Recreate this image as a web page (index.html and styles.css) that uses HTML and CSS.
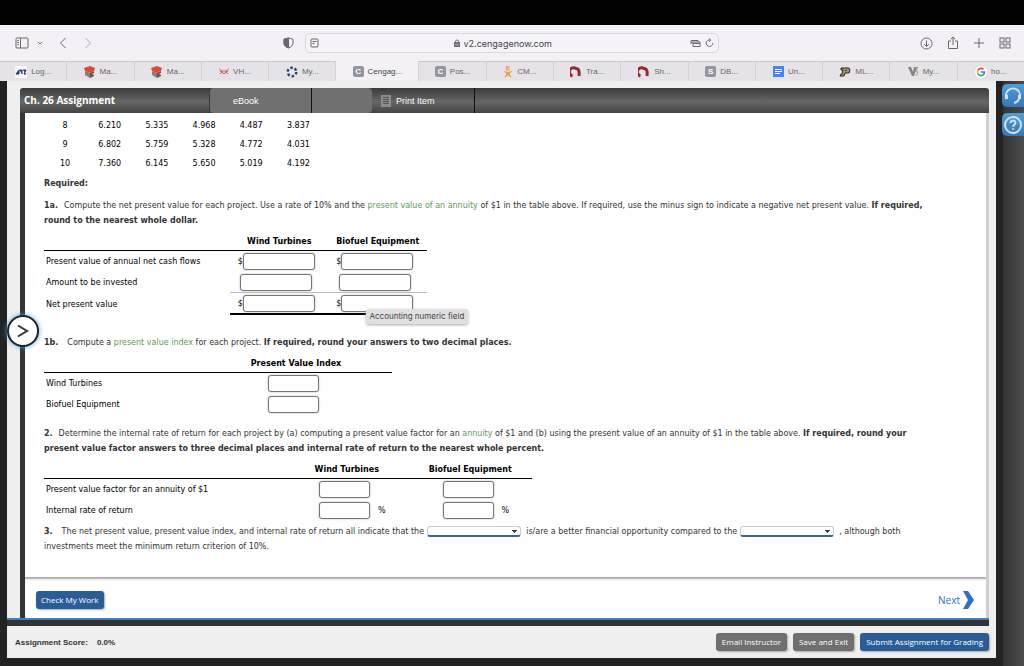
FILE: index.html
```html
<!DOCTYPE html>
<html lang="en">
<head>
    <meta charset="UTF-8">
    <meta name="viewport" content="width=device-width, initial-scale=1.0">
    <title>Ch. 26 Assignment - CengageNOW</title>
    <link rel="stylesheet" href="styles.css">
</head>
<body>
    <!-- Browser toolbar -->
    <header class="toolbar">
        <div class="tools tools-left">
            <button class="icon-btn" aria-label="Show sidebar"><svg width="14" height="12" viewBox="0 0 14 12"><rect x="1" y="1" width="12" height="10" rx="1"/><path d="M5.5 1v10M2.3 3.5h1.6M2.3 5.5h1.6M2.3 7.5h1.6"/></svg></button>
            <button class="icon-btn chevron" aria-label="Tab groups"><svg width="6" height="5" viewBox="0 0 6 5"><path d="M1 1l2 2 2-2"/></svg></button>
            <button class="icon-btn back" aria-label="Back"><svg width="8" height="12" viewBox="0 0 8 12"><path d="M6.5 1L1.500 6l5 5"/></svg></button>
            <button class="icon-btn forward" aria-label="Forward"><svg width="8" height="12" viewBox="0 0 8 12"><path d="M1.500 1l5 5-5 5"/></svg></button>
            <button class="icon-btn shield" aria-label="Privacy report"><svg width="11" height="12" viewBox="0 0 11 12"><path d="M5.500 1L10 2.200V6c0 2.500-2 4-4.500 5C3 10 1 8.500 1 6V2.200z"/><path d="M5.500 1L1 2.200V6c0 2.500 2 4 4.500 5z" fill="#6b696e"/></svg></button>
        </div>
        <div class="address">
            <svg width="9" height="10" viewBox="0 0 9 10"><rect x="1" y="1" width="7" height="8" rx="1"/><path d="M2.500 3.500h4M2.500 5.500h2"/></svg>
            <div class="address-url">
                <svg width="6" height="8" viewBox="0 0 6 8"><path d="M1.500 4V2.500a1.500 1.500 0 013 0V4"/><rect x="0.500" y="3.500" width="5" height="4" fill="#8c8a8f"/></svg>
                <input type="text" value="v2.cengagenow.com" aria-label="Address">
            </div>
            <svg width="11" height="9" viewBox="0 0 11 9"><path d="M3 7.500h7V3H3zM1 5V1.500h7V3M1 3.200h2M3 4.500h7"/></svg>
            <svg width="9" height="10" viewBox="0 0 9 10"><path d="M7.800 5a3.300 3.300 0 11-2.500-3M4 .5l1.700 1.600L4.200 3.800"/></svg>
        </div>
        <div class="tools tools-right">
            <button class="icon-btn" aria-label="Downloads"><svg width="13" height="13" viewBox="0 0 13 13"><circle cx="6.500" cy="6.500" r="5.500"/><path d="M6.500 3.500v6M4.200 7.200l2.300 2.300 2.300-2.300"/></svg></button>
            <button class="icon-btn" aria-label="Share"><svg width="12" height="14" viewBox="0 0 12 14"><path d="M4 5H1.500v7.500h9V5H8M6 9V1M3.700 3.200L6 1l2.300 2.200"/></svg></button>
            <button class="icon-btn" aria-label="New tab"><svg width="12" height="12" viewBox="0 0 12 12"><path d="M6 1v10M1 6h10"/></svg></button>
            <button class="icon-btn" aria-label="Tab overview"><svg width="12" height="12" viewBox="0 0 12 12"><rect x="1" y="1" width="4" height="4"/><rect x="7" y="1" width="4" height="4"/><rect x="1" y="7" width="4" height="4"/><rect x="7" y="7" width="4" height="4"/></svg></button>
        </div>
    </header>

    <nav class="tabs">
        <a href="#" class="tab"><svg width="12" height="12" viewBox="0 0 12 12"><rect width="12" height="12" fill="#f8f8fa"/><path d="M1 8l3-4v4zM4.500 4h2.500v4M8 4h3L9 8h2" fill="#3c4a86" stroke="#28316f"/></svg>Log...</a>
        <a href="#" class="tab"><svg width="12" height="12" viewBox="0 0 12 12"><path d="M1 5l5 2v5L1 9z" fill="#8b7d72"/><path d="M6 7l4-2v2L8 8l2 1v1l-4 2z" fill="#62554c"/><path d="M0 2l6-2 5 2-1 3-4 2-5-2z" fill="#d94b36"/></svg>Ma...</a>
        <a href="#" class="tab"><svg width="12" height="12" viewBox="0 0 12 12"><path d="M1 5l5 2v5L1 9z" fill="#8b7d72"/><path d="M6 7l4-2v2L8 8l2 1v1l-4 2z" fill="#62554c"/><path d="M0 2l6-2 5 2-1 3-4 2-5-2z" fill="#d94b36"/></svg>Ma...</a>
        <a href="#" class="tab"><svg width="10" height="8" viewBox="0 0 10 8"><path d="M0 1l3 2h4l3-2M1 3.500h2l1 2h2l1-2h2M3 4L1 6M7 4l2 2" fill="none" stroke="#cf4547" stroke-width="0.800"/></svg>VH...</a>
        <a href="#" class="tab"><svg width="12" height="12" viewBox="0 0 12 12"><circle cx="6" cy="6" r="4.300" fill="none" stroke="#1d4470" stroke-width="2.400" stroke-dasharray="2.500 2"/></svg>My...</a>
        <a href="#" class="tab active"><span class="letter">C</span>Cengag...</a>
        <a href="#" class="tab"><span class="letter">C</span>Pos...</a>
        <a href="#" class="tab"><svg width="10" height="12" viewBox="0 0 10 12"><path d="M6.500 1h-3v2.500h3M1 5.500q4 2 8 0M3 8h4M2 11l3-3 3 3" fill="none" stroke="#f19a48" stroke-width="1.300"/></svg>CM...</a>
        <a href="#" class="tab"><svg width="12" height="12" viewBox="0 0 12 12"><path d="M2.500 10A4.200 4.200 0 116 2.500c3 0 3.500 3 3 7.500" fill="none" stroke="#98282f" stroke-width="3"/></svg>Tra...</a>
        <a href="#" class="tab"><svg width="12" height="12" viewBox="0 0 12 12"><path d="M2.500 10A4.200 4.200 0 116 2.500c3 0 3.500 3 3 7.500" fill="none" stroke="#98282f" stroke-width="3"/></svg>Sh...</a>
        <a href="#" class="tab"><span class="letter">S</span>DB...</a>
        <a href="#" class="tab"><svg width="11" height="11" viewBox="0 0 11 11"><rect width="11" height="11" fill="#4a80ec"/><path d="M2 3.500h7M2 5.500h7M2 7.500h5" stroke="#fff"/></svg>Un...</a>
        <a href="#" class="tab"><svg width="12" height="10" viewBox="0 0 12 10"><path d="M2 1h8l1 2-1 3H6L5 9H1l1-2h1l1-4H2z" fill="#a6946b" stroke="#262421"/><path d="M6.500 3H8L7.500 4H6z" fill="#262421"/></svg>ML...</a>
        <a href="#" class="tab"><svg width="11" height="11" viewBox="0 0 11 11"><path d="M0 1h3l2 5 1-5h3L6 10H4z" fill="#85827f"/><path d="M7 3l3-2-2 4 2 1-2 4" fill="none" stroke="#a59a91"/></svg>My...</a>
        <a href="#" class="tab"><svg width="12" height="12" viewBox="0 0 12 12"><circle cx="6" cy="6" r="6" fill="#fff"/><g fill="none" stroke-width="1.700"><path d="M8.500 3.300A3.500 3.500 0 002.800 4.500" stroke="#e64a3c"/><path d="M2.800 4.500a3.500 3.500 0 000 3" stroke="#f4b928"/><path d="M2.800 7.500A3.500 3.500 0 008 9" stroke="#3ba656"/><path d="M8 9a3.500 3.500 0 001.500-3H6" stroke="#437fe8"/></g></svg>ho...</a>
    </nav>

    <div class="page">
        <main class="app">
            <div class="assignment">
                <div class="title-bar">
                    <h1>Ch. 26 Assignment</h1>
                    <button class="menu-item ebook">eBook</button>
                    <span class="menu-blank"></span>
                    <button class="menu-item print"><svg width="10" height="12" viewBox="0 0 10 12"><rect width="10" height="12" fill="#8c8c8c"/><path d="M2 2.500h6M2 4.500h6M2 6.500h6M2 8.500h6" stroke="#555"/></svg>Print Item</button>
                </div>

                <div class="content">
                    <table class="factors">
                        <tr><td>8</td><td>6.210</td><td>5.335</td><td>4.968</td><td>4.487</td><td>3.837</td></tr>
                        <tr><td>9</td><td>6.802</td><td>5.759</td><td>5.328</td><td>4.772</td><td>4.031</td></tr>
                        <tr><td>10</td><td>7.360</td><td>6.145</td><td>5.650</td><td>5.019</td><td>4.192</td></tr>
                    </table>
                    <p class="required"><b>Required:</b></p>

                    <p class="question"><b class="num">1a.</b>Compute the net present value for each project. Use a rate of 10% and the <a href="#">present value of an annuity</a> of $1 in the table above. If required, use the minus sign to indicate a negative net present value. <b>If required,<br>round to the nearest whole dollar.</b></p>
                    <table class="answers npv">
                        <tr><th class="label"></th><th>Wind Turbines</th><th>Biofuel Equipment</th></tr>
                        <tr>
                            <td class="label">Present value of annual net cash flows</td>
                            <td>$<input type="text" aria-label="Wind Turbines present value"></td>
                            <td>$<input type="text" aria-label="Biofuel Equipment present value"></td>
                        </tr>
                        <tr class="subtotal">
                            <td class="label">Amount to be invested</td>
                            <td><input type="text" aria-label="Wind Turbines amount invested"></td>
                            <td><input type="text" aria-label="Biofuel Equipment amount invested"></td>
                        </tr>
                        <tr class="total">
                            <td class="label">Net present value</td>
                            <td>$<input type="text" aria-label="Wind Turbines net present value"></td>
                            <td class="has-tip">$<input type="text" aria-label="Biofuel Equipment net present value"><span class="tooltip">Accounting numeric field</span></td>
                        </tr>
                    </table>

                    <p class="question part-b"><b class="num wide">1b.</b>Compute a <a href="#">present value index</a> for each project. <b>If required, round your answers to two decimal places.</b></p>
                    <table class="answers index">
                        <tr><th class="label"></th><th>Present Value Index</th></tr>
                        <tr><td class="label"><label for="pvi-wind">Wind Turbines</label></td><td><input type="text" id="pvi-wind"></td></tr>
                        <tr><td class="label"><label for="pvi-bio">Biofuel Equipment</label></td><td><input type="text" id="pvi-bio"></td></tr>
                    </table>

                    <p class="question part-2"><b class="num">2.</b>Determine the internal rate of return for each project by (a) computing a present value factor for an <a href="#">annuity</a> of $1 and (b) using the present value of an annuity of $1 in the table above. <b>If required, round your<br>present value factor answers to three decimal places and internal rate of return to the nearest whole percent.</b></p>
                    <table class="answers irr">
                        <tr><th class="label"></th><th>Wind Turbines</th><th>Biofuel Equipment</th></tr>
                        <tr>
                            <td class="label">Present value factor for an annuity of $1</td>
                            <td><input type="text" aria-label="Wind Turbines factor"></td>
                            <td><input type="text" aria-label="Biofuel Equipment factor"></td>
                        </tr>
                        <tr>
                            <td class="label">Internal rate of return</td>
                            <td><input type="text" aria-label="Wind Turbines rate of return"><span class="percent">%</span></td>
                            <td><input type="text" aria-label="Biofuel Equipment rate of return"><span class="percent">%</span></td>
                        </tr>
                    </table>

                    <p class="question part-3"><b class="num wide">3.</b>The net present value, present value index, and internal rate of return all indicate that the <select aria-label="Better project"><option></option><option>wind turbines</option><option>biofuel equipment</option></select> is/are a better financial opportunity compared to the <select aria-label="Other project"><option></option><option>wind turbines</option><option>biofuel equipment</option></select> , although both<br>investments meet the minimum return criterion of 10%.</p>
                </div>

                <div class="actions">
                    <button class="btn primary">Check My Work</button>
                    <a href="#" class="next">Next<svg width="11" height="18" viewBox="0 0 11 18"><path d="M0 0h5l6 9-6 9H0l5-9z" fill="#2f6fc4"/></svg></a>
                </div>
                <button class="expand" aria-label="Open navigation"><svg width="12" height="14" viewBox="0 0 12 14"><path d="M1 1.500L10 7l-9 5.500"/></svg></button>
            </div>
            <footer class="score-bar">
                <p class="score">Assignment Score:<span>0.0%</span></p>
                <button class="btn">Email Instructor</button>
                <button class="btn">Save and Exit</button>
                <button class="btn primary">Submit Assignment for Grading</button>
            </footer>
        </main>
        <aside class="side">
            <button class="side-btn" aria-label="Support"><svg width="18" height="18" viewBox="0 0 18 18"><path d="M3 12a7 7 0 1112 0c-1 2-2.500 3.500-5 4"/><path d="M2.500 8v4M15.500 8v4" stroke-width="3"/></svg></button>
            <button class="side-btn" aria-label="Help"><svg width="18" height="18" viewBox="0 0 18 18"><circle cx="9" cy="9" r="8"/><path d="M6.500 7a2.500 2.500 0 115 0c0 1.500-2.500 2-2.500 3.800M9 12.200v1.600"/></svg></button>
        </aside>
    </div>
</body>
</html>
```

FILE: styles.css
```css
* {
    box-sizing: border-box;
}
body {
    margin: 0;
    height: 100vh;
    padding-top: 25px;
    display: flex;
    flex-direction: column;
    overflow: hidden;
    background: #000;
    font-family: "DejaVu Sans", Verdana, sans-serif;
    font-size: 8px;
    color: #333;
}
button, input, select {
    font: inherit;
    margin: 0;
}
p, h1 {
    margin: 0;
}

/* Browser toolbar */
.toolbar {
    display: grid;
    grid-template-columns: 1fr 40.5% 1fr;
    align-items: center;
    height: 36px;
    flex: none;
    background: #f3f1f6;
}
.toolbar svg {
    display: block;
    flex: none;
    fill: none;
    stroke: #6b696e;
}
.tools {
    display: flex;
    align-items: center;
}
.tools-left {
    padding: 0 11px 0 15px;
}
.tools-right {
    justify-content: flex-end;
    gap: 14px;
    padding-right: 13px;
}
.icon-btn {
    padding: 0;
    border: 0;
    background: none;
}
.chevron {
    margin-left: 8px;
}
.back {
    margin-left: 16px;
}
.forward {
    margin-left: 17px;
    opacity: 0.5;
}
.shield {
    margin-left: auto;
}
.address {
    display: flex;
    align-items: center;
    gap: 4px;
    height: 20px;
    padding: 0 4px;
    border: 1px solid #dbd9de;
    border-radius: 5px;
    background: #f5f3f8;
}
.address-url {
    flex: 1;
    display: flex;
    align-items: center;
    justify-content: center;
    gap: 4px;
}
.address-url input {
    width: 92px;
    padding: 0;
    border: 0;
    background: none;
    font: 9px Inter, sans-serif;
    color: #444;
}

/* Tabs */
.tabs {
    display: flex;
    flex: none;
    height: 20px;
    background: #e5e3e8;
}
.tab {
    flex: 1;
    display: flex;
    align-items: center;
    justify-content: center;
    gap: 4px;
    border-top: 1px solid #c9c7cc;
    border-right: 1px solid #d3d1d6;
    font: 8px "Liberation Sans", Arial, sans-serif;
    color: #666;
    text-decoration: none;
}
.tab.active {
    flex: none;
    width: 83px;
    background: #f3f1f6;
    border-top-color: #f3f1f6;
    color: #444;
}
.tab:last-child {
    border-right: 0;
}
.letter {
    width: 11px;
    height: 11px;
    border-radius: 2px;
    background: #9295a0;
    color: #fff;
    font-weight: bold;
    line-height: 11px;
    text-align: center;
}

/* Page */
.page {
    flex: 1;
    min-height: 0;
    display: flex;
    padding-left: 7px;
    background: #222;
}
.app {
    flex: 1;
    min-width: 0;
    display: flex;
    flex-direction: column;
    margin: 0 7px 8px 0;
    background: #efefef;
}
.assignment {
    position: relative;
    flex: 1;
    min-height: 0;
    display: flex;
    flex-direction: column;
    margin: 7px 7px 0 13px;
}
.title-bar {
    display: flex;
    flex: none;
    height: 25px;
    border-radius: 3px 3px 0 0;
    background: linear-gradient(#3b3b3b, #666 55%, #444);
}
.title-bar h1 {
    width: 190px;
    padding-left: 4px;
    font: bold 10px/24px "Open Sans", sans-serif;
    color: #fff;
    border-right: 1px solid #3a3a3a;
}
.menu-item {
    display: flex;
    align-items: center;
    border: 0;
    border-right: 1px solid #111;
    font: 9px "Liberation Sans", Arial, sans-serif;
    color: #fff;
    background: none;
}
.ebook {
    width: 102px;
    padding: 0 23px;
    background: #707070;
    border-radius: 4px 0 0 4px;
}
.menu-blank {
    width: 60px;
    background: #707070;
    border-radius: 0 4px 4px 0;
}
.print {
    width: 103px;
    padding: 0 9px;
    gap: 5px;
}
.content {
    flex: 1;
    min-height: 0;
    overflow: hidden;
    padding: 3px 0 0 19px;
    background: #fff;
    border-left: 5px solid #333537;
    border-right: 3px solid #cfcfcf;
}
table {
    border-collapse: separate;
    border-spacing: 0;
    table-layout: fixed;
    color: #000;
}
td, th {
    padding: 0;
}
.factors {
    width: 278px;
    text-align: center;
}
.factors td {
    width: 47px;
    height: 19px;
}
.factors td:first-child {
    width: 42px;
}
.required {
    line-height: 15px;
    margin: 3px 0 7px;
}
.question {
    line-height: 15px;
    white-space: nowrap;
}
.question a {
    color: #5f9a58;
    text-decoration: none;
}
.num {
    margin-right: 6px;
}
.num.wide {
    margin-right: 9px;
}
.part-b {
    margin-top: 20px;
}
.part-2 {
    margin-top: 11px;
}
.part-3 {
    margin-top: 3px;
}

/* Answer tables */
.answers {
    margin-top: 4px;
}
.answers th {
    height: 19px;
    border-bottom: 1px solid #000;
}
.answers td {
    height: 21px;
    text-align: center;
    white-space: nowrap;
}
.answers td.label {
    padding-left: 2px;
    text-align: left;
}
.answers input {
    width: 51px;
    height: 17px;
    padding: 0 3px;
    border: 1px solid #777;
    border-radius: 3px;
    background: #fff;
    box-shadow: 0 0 2px #aaa;
    vertical-align: middle;
}
.npv {
    width: 383px;
}
.npv .label {
    width: 186px;
}
.npv td:not(.label), .index td:not(.label) {
    padding-right: 6px;
}
.npv input {
    width: 72px;
}
.subtotal td:not(.label) {
    border-bottom: 1px solid #bbb;
}
.answers .total td {
    height: 22px;
}
.total td:not(.label) {
    border-bottom: 2px solid #000;
}
.index {
    width: 348px;
}
.index .label {
    width: 156px;
}
.irr {
    width: 488px;
}
.irr .label {
    width: 241px;
}
.irr td:not(.label) {
    padding-left: 34px;
    text-align: left;
}
.percent {
    margin-left: 8px;
}
.has-tip {
    position: relative;
}
.tooltip {
    position: absolute;
    top: 16px;
    left: 37px;
    z-index: 1;
    padding: 0 4px;
    background: #e2dfe3;
    border-radius: 3px;
    box-shadow: 0 1px 3px #aaa;
    font: 8px/15px Inter, sans-serif;
    color: #444;
}
.question select {
    appearance: none;
    width: 94px;
    height: 11px;
    padding: 0;
    border: 1px solid #ccc;
    border-bottom: 2px solid #37659a;
    border-radius: 3px;
    background: linear-gradient(#444, #444) no-repeat right 3px top 3px / 5px 1px,
                linear-gradient(#444, #444) no-repeat right 4px top 4px / 3px 1px,
                linear-gradient(#444, #444) no-repeat right 5px top 5px / 1px 1px,
                #fff;
    vertical-align: middle;
    margin-right: 3px;
}

/* Bottom bars */
.actions {
    flex: none;
    display: flex;
    align-items: center;
    justify-content: space-between;
    height: 41px;
    padding: 5px 12px 0 11px;
    background: #fff;
    border-left: 5px solid #333537;
    border-right: 3px solid #cfcfcf;
    box-shadow: inset 0 3px 2px -1px #aaa;
}
.btn {
    height: 18px;
    padding: 0 6px;
    border: 0;
    border-radius: 3px;
    background: #6f6f6f;
    color: #fff;
    font: 8px/18px "Open Sans", sans-serif;
    box-shadow: 1px 1px 2px #aaa;
}
.btn.primary {
    background: #2a5d96;
}
.actions .btn {
    padding: 0 5px;
}
.next {
    display: flex;
    align-items: center;
    gap: 3px;
    font: 10px "Open Sans", sans-serif;
    color: #2f6fc4;
    text-decoration: none;
}
.expand {
    position: absolute;
    top: 227px;
    left: -13px;
    width: 32px;
    height: 32px;
    padding: 0;
    display: flex;
    align-items: center;
    justify-content: center;
    border: 2px solid #222;
    border-radius: 50%;
    background: #fff;
    box-shadow: 0 0 5px #4aa3e0;
}
.expand svg {
    fill: none;
    stroke: #333;
    stroke-width: 2;
}
.score-bar {
    flex: none;
    display: flex;
    align-items: center;
    gap: 6px;
    height: 40px;
    padding: 8px 7px 0 8px;
    background: linear-gradient(#3f7fbb 2px, #333 2px, #333 8px, #efefef 8px) no-repeat left / calc(100% - 7px) 100%;
}
.score {
    margin-right: auto;
    font: bold 8px "Liberation Sans", Arial, sans-serif;
}
.score span {
    margin-left: 9px;
}

/* Right edge */
.side {
    width: 21px;
    padding-top: 3px;
    display: flex;
    flex-direction: column;
    gap: 6px;
    background: linear-gradient(90deg, #333, #4b4b4b);
}
.side-btn {
    width: 22px;
    height: 23px;
    margin-left: -1px;
    padding: 0;
    display: flex;
    align-items: center;
    justify-content: center;
    border: 0;
    border-radius: 5px 0 0 5px;
    background: linear-gradient(#4ba0dc, #3578b4);
}
.side-btn svg {
    fill: none;
    stroke: #ddd;
    stroke-width: 2;
}
```
